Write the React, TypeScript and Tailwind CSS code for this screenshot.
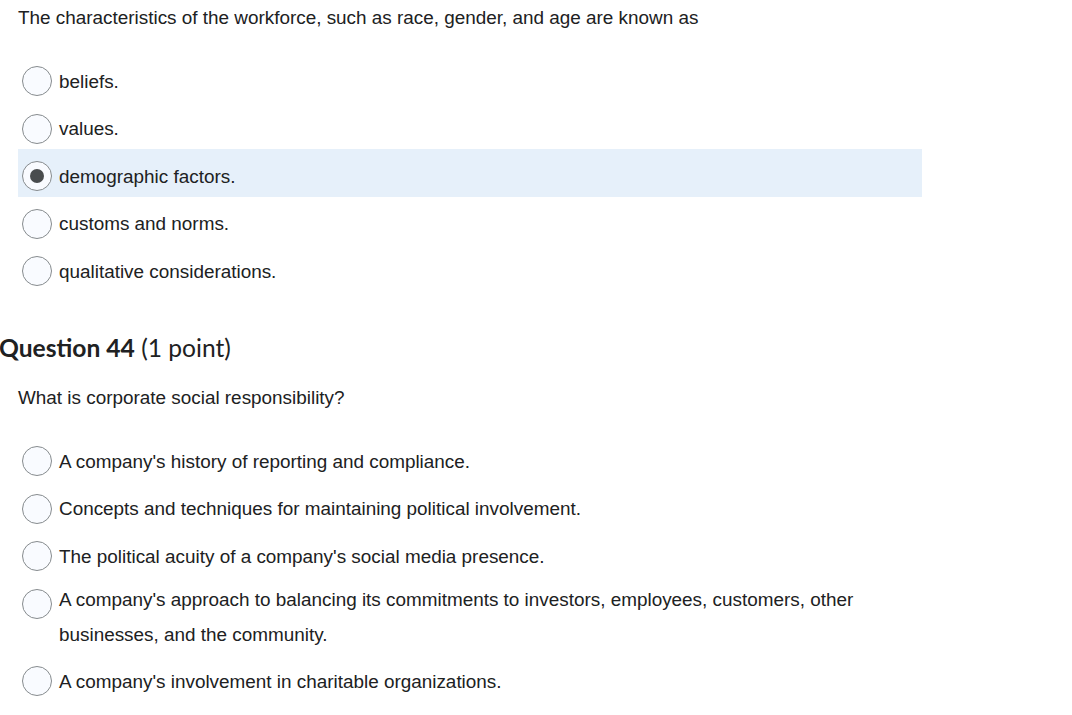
import React from 'react';

type Option = { text: string; selected?: boolean };

const q43Options: Option[] = [
  { text: 'beliefs.' },
  { text: 'values.' },
  { text: 'demographic factors.', selected: true },
  { text: 'customs and norms.' },
  { text: 'qualitative considerations.' },
];

const Radio = ({ checked }: { checked?: boolean }) => (
  <span className="flex h-[30px] w-[30px] shrink-0 items-center justify-center rounded-full border border-[#868b8e] bg-[#f9fbff]">
    {checked && <span className="h-[14px] w-[14px] rounded-full bg-[#494c4e]" />}
  </span>
);

const OptionRow = ({ option }: { option: Option }) => (
  <div
    className={`flex h-[47.5px] items-center gap-[7px] pl-[4px] pt-[7px] ${option.selected ? 'bg-[#e6f0fa]' : ''}`}
  >
    <Radio checked={option.selected} />
    <span className="leading-[35px]">{option.text}</span>
  </div>
);

export default function App() {
  return (
    <div className="min-h-[715px] w-[1072px] bg-white font-['Liberation_Sans',Arial,sans-serif] text-[18.9px] text-[#202122]">
      <div className="w-[922px]">
        <p className="pl-[18px] pt-[6px] leading-[24px]">
          The characteristics of the workforce, such as race, gender, and age are known as
        </p>

        <div className="ml-[18px] mt-[24px]">
          {q43Options.map((o) => (
            <OptionRow key={o.text} option={o} />
          ))}
        </div>

        <h2 className="-ml-[1px] mt-[40px] font-['Lato',sans-serif] text-[24.6px] leading-[32px] text-[#202122]">
          <span className="font-bold">Question 44</span> <span className="font-normal">(1 point)</span>
        </h2>

        <p className="mt-[22px] pl-[18px] leading-[24px]">What is corporate social responsibility?</p>

        <div className="ml-[18px] mt-[24.5px]">
          <OptionRow option={{ text: "A company's history of reporting and compliance." }} />
          <OptionRow option={{ text: 'Concepts and techniques for maintaining political involvement.' }} />
          <OptionRow option={{ text: "The political acuity of a company's social media presence." }} />
          <div className="flex items-start gap-[7px] pb-[2.25px] pl-[4px] pt-[5px]">
            <span className="mt-[7px]">
              <Radio />
            </span>
            <span className="leading-[35px]">
              A company's approach to balancing its commitments to investors, employees, customers, other
              businesses, and the community.
            </span>
          </div>
          <OptionRow option={{ text: "A company's involvement in charitable organizations." }} />
        </div>
      </div>
    </div>
  );
}
